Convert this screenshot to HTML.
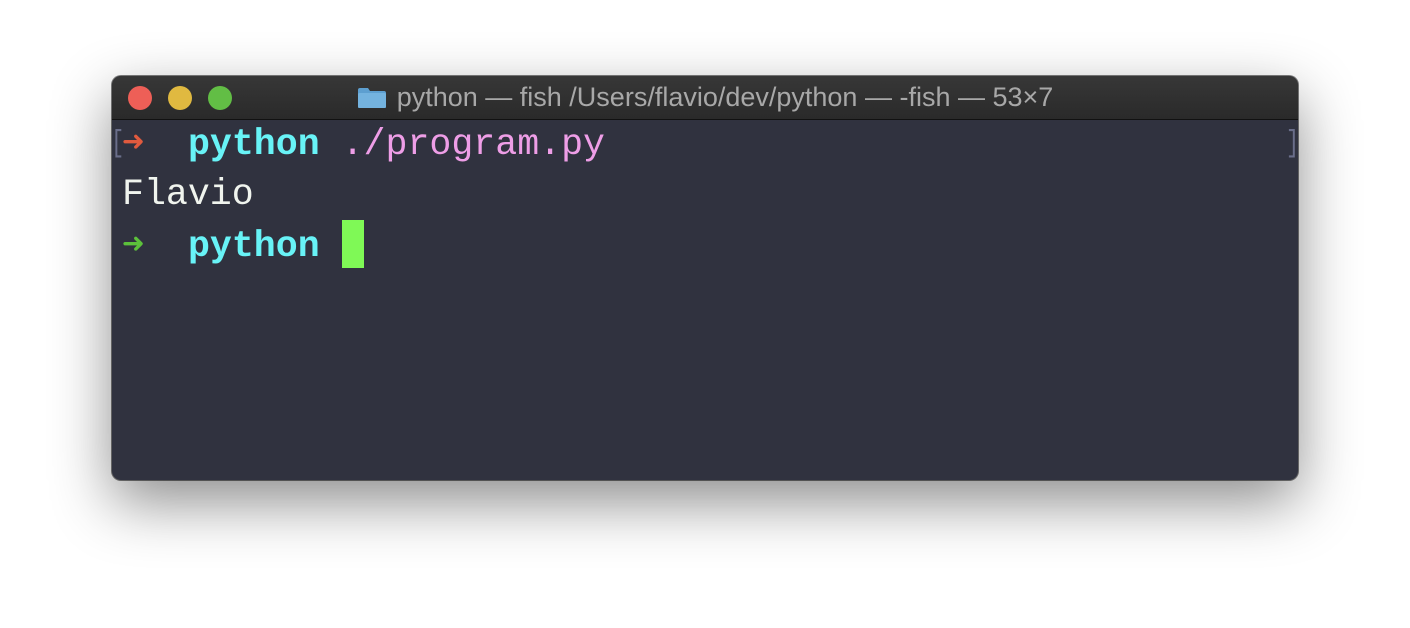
<!DOCTYPE html>
<html><head><style>
html,body{margin:0;padding:0;background:#fff;width:1410px;height:628px;overflow:hidden}
.win{position:absolute;left:112px;top:76px;width:1186px;height:404px;border-radius:9px;background:#30323f;overflow:hidden;
box-shadow:0 22px 60px rgba(0,0,0,.45),0 0 0 1px rgba(0,0,0,.5)}
.tb{position:absolute;left:0;top:0;right:0;height:43px;background:linear-gradient(#373737,#2a2a2a);border-bottom:1px solid #111}
.dot{position:absolute;top:10px;width:24px;height:24px;border-radius:50%}
.title{position:absolute;left:0;right:0;top:6px;text-align:center;font:27px "Liberation Sans",sans-serif;color:#a8a8a8}
.fold{display:inline-block;width:30px;height:22px;vertical-align:-3px;margin-right:10px;position:relative}
.term{position:absolute;left:10px;top:44px;font-family:"Liberation Mono",monospace;font-size:36.6px;line-height:50px;white-space:pre;color:#f0f4ee}
.b{font-weight:bold}
.cur{display:inline-block;width:22px;height:48px;background:#7ff956;vertical-align:-12px}
.br{position:absolute;font:22px "Liberation Mono",monospace;color:#6a6e8a;transform:scaleY(1.4)}
</style></head><body>
<div class="win">
<div class="tb">
<div class="dot" style="left:16px;background:#ee5f57"></div>
<div class="dot" style="left:56px;background:#e0b940"></div>
<div class="dot" style="left:96px;background:#62be45"></div>
<div class="title"><svg class="fold" viewBox="0 0 30 22"><path d="M1 3 Q1 1 3 1 H11 L13 4 H27 Q29 4 29 6 V20 Q29 21 27 21 H3 Q1 21 1 20 Z" fill="#5d9fd0"/><rect x="1" y="6" width="28" height="15" rx="1.5" fill="#74b3df"/></svg>python — fish /Users/flavio/dev/python — -fish — 53×7</div>
</div>
<div class="br" style="left:-1px;top:55px">[</div>
<div class="br" style="left:1174px;top:55px">]</div>
<div class="term"><span class="b" style="color:#e05a3e">➜</span>  <span class="b" style="color:#68f3f7">python</span> <span style="color:#ee9ee7">./program.py</span>
Flavio
<span class="b" style="color:#5cc13b">➜</span>  <span class="b" style="color:#68f3f7">python</span> <span class="cur"></span></div>
</div>
</body></html>
